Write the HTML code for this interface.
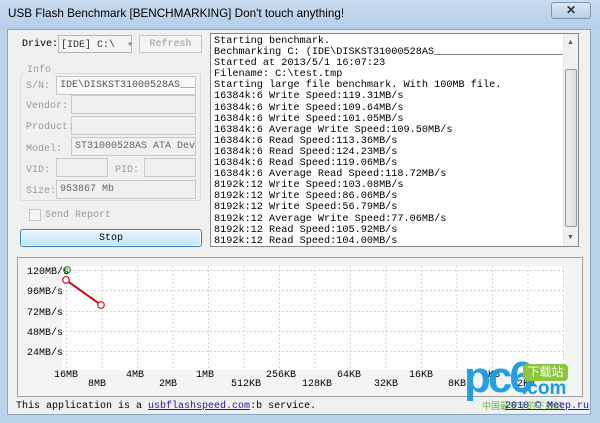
<!DOCTYPE html>
<html><head><meta charset="utf-8"><style>
*{margin:0;padding:0;box-sizing:border-box}
body{width:600px;height:423px;overflow:hidden;background:#bcd3ec;font-family:"Liberation Sans",sans-serif;position:relative}
.abs{position:absolute}
.mono{font-family:"Liberation Mono","Noto Sans CJK SC",monospace;font-size:10px;white-space:pre}
.grey{color:#9a9a9a}
.field{position:absolute;border:1px solid #c8c8c8;background:#f0f0f0;height:19px;font-family:"Liberation Mono",monospace;font-size:10px;color:#777;padding:3px 3px;white-space:pre;overflow:hidden}
.xl span{position:absolute;top:0}
.xl span.b{top:9px}
</style></head><body>
<div class="abs" style="left:0;top:0;width:600px;height:30px;background:linear-gradient(#c9dcf0,#b4cde9)"></div>
<div class="abs" style="left:8px;top:7px;font-size:11.7px;color:#000">USB Flash Benchmark [BENCHMARKING] Don't touch anything!</div>
<div class="abs" style="left:551px;top:2px;width:40px;height:17px;border:1px solid #7d95b2;border-radius:3px;background:linear-gradient(#dbe7f4,#b9cde4);font-size:12px;text-align:center;line-height:15px;color:#333;font-weight:bold">✕</div>
<div class="abs" style="left:7px;top:29px;width:584px;height:386px;background:#f0f0f0;border:1px solid #8ba4c2"></div>

<div class="abs mono" style="left:22px;top:39px;color:#000">Drive:</div>
<div class="abs mono" style="left:58px;top:35px;width:74px;height:18px;border:1px solid #b5b5b5;background:#f4f4f4;padding:3px 2px;color:#333">[IDE] C:\  <span style="color:#888">▾</span></div>
<div class="abs mono" style="left:139px;top:35px;width:63px;height:18px;border:1px solid #c4c4c4;background:#f4f4f4;text-align:center;padding-top:3px;color:#999">Refresh</div>

<div class="abs" style="left:20px;top:73px;width:181px;height:128px;border:1px solid #dcdcdc;border-radius:2px"></div>
<div class="abs mono grey" style="left:26px;top:65px;background:#f0f0f0;padding:0 1px">Info</div>
<div class="abs mono grey" style="left:26px;top:81px">S/N:</div>
<div class="field" style="left:56px;top:76px;width:140px;background:#f8f8f8;color:#555">IDE\DISKST31000528AS_____</div>
<div class="abs mono grey" style="left:26px;top:101px">Vendor:</div>
<div class="field" style="left:71px;top:95px;width:125px"></div>
<div class="abs mono grey" style="left:26px;top:122px">Product:</div>
<div class="field" style="left:71px;top:116px;width:125px"></div>
<div class="abs mono grey" style="left:26px;top:144px">Model:</div>
<div class="field" style="left:71px;top:137px;width:125px;color:#666">ST31000528AS ATA Devic</div>
<div class="abs mono grey" style="left:26px;top:165px">VID:</div>
<div class="field" style="left:56px;top:158px;width:52px"></div>
<div class="abs mono grey" style="left:115px;top:165px">PID:</div>
<div class="field" style="left:144px;top:158px;width:52px"></div>
<div class="abs mono grey" style="left:26px;top:186px">Size:</div>
<div class="field" style="left:56px;top:180px;width:140px;color:#666">953867 Mb</div>

<div class="abs" style="left:29px;top:209px;width:12px;height:12px;border:1px solid #c6c6c6;background:#f4f4f4"></div>
<div class="abs mono grey" style="left:45px;top:210px">Send Report</div>
<div class="abs mono" style="left:20px;top:229px;width:182px;height:18px;border:1px solid #3c7fb1;border-radius:3px;background:linear-gradient(#eaf6fd,#bee6fd);text-align:center;padding-top:3px;color:#000;box-shadow:inset 0 0 0 1px #fff">Stop</div>

<div class="abs" style="left:210px;top:33px;width:369px;height:214px;border:1px solid #828790;background:#fff;overflow:hidden">
<div class="abs mono" style="left:3px;top:2px;line-height:11.1px;color:#000;font-size:10.2px">Starting benchmark.
Bechmarking C: (IDE\DISKST31000528AS________________________
Started at 2013/5/1 16:07:23
Filename: C:\test.tmp
Starting large file benchmark. With 100MB file.
16384k:6 Write Speed:119.31MB/s
16384k:6 Write Speed:109.64MB/s
16384k:6 Write Speed:101.05MB/s
16384k:6 Average Write Speed:109.50MB/s
16384k:6 Read Speed:113.36MB/s
16384k:6 Read Speed:124.23MB/s
16384k:6 Read Speed:119.06MB/s
16384k:6 Average Read Speed:118.72MB/s
8192k:12 Write Speed:103.08MB/s
8192k:12 Write Speed:86.06MB/s
8192k:12 Write Speed:56.79MB/s
8192k:12 Average Write Speed:77.06MB/s
8192k:12 Read Speed:105.92MB/s
8192k:12 Read Speed:104.00MB/s</div>
<div class="abs" style="left:352px;top:0;width:16px;height:212px;background:#f0f0f0;border-left:1px solid #e8e8e8"></div>
<div class="abs" style="left:356px;top:5px;font-size:7px;color:#555">▲</div>
<div class="abs" style="left:356px;top:200px;font-size:7px;color:#555">▼</div>
<div class="abs" style="left:354px;top:35px;width:12px;height:158px;border:1px solid #9a9a9a;border-radius:2px;background:linear-gradient(90deg,#eee,#dcdcdc)"></div>
</div>

<div class="abs" style="left:17px;top:257px;width:566px;height:140px;border:1px solid #a0a0a0;background:#f4f4f4"></div>
<svg class="abs" style="left:0;top:0" width="600" height="423">
<rect x="62" y="266" width="503" height="104" fill="#fff"/>
<g stroke="#d4d4d4" stroke-dasharray="2,2" stroke-width="1">
<line x1="62" y1="270.5" x2="565" y2="270.5"/><line x1="62" y1="290.5" x2="565" y2="290.5"/><line x1="62" y1="311.5" x2="565" y2="311.5"/><line x1="62" y1="331.5" x2="565" y2="331.5"/><line x1="62" y1="351.5" x2="565" y2="351.5"/>
<line x1="66.5" y1="266" x2="66.5" y2="370"/><line x1="102" y1="266" x2="102" y2="370"/><line x1="137.5" y1="266" x2="137.5" y2="370"/><line x1="173" y1="266" x2="173" y2="370"/><line x1="208.5" y1="266" x2="208.5" y2="370"/><line x1="244" y1="266" x2="244" y2="370"/><line x1="279.5" y1="266" x2="279.5" y2="370"/><line x1="315" y1="266" x2="315" y2="370"/><line x1="350.5" y1="266" x2="350.5" y2="370"/><line x1="386" y1="266" x2="386" y2="370"/><line x1="421.5" y1="266" x2="421.5" y2="370"/><line x1="457" y1="266" x2="457" y2="370"/><line x1="492.5" y1="266" x2="492.5" y2="370"/><line x1="528" y1="266" x2="528" y2="370"/><line x1="563.5" y1="266" x2="563.5" y2="370"/>
</g>
<line x1="66" y1="280" x2="101" y2="305" stroke="#c8141e" stroke-width="2"/>
<circle cx="67" cy="270" r="3.3" fill="#fff" stroke="#2a8a2a" stroke-width="1.2"/>
<circle cx="66" cy="280" r="3.3" fill="#fff" stroke="#c8141e" stroke-width="1.2"/>
<circle cx="101" cy="305" r="3.3" fill="#fff" stroke="#c8141e" stroke-width="1.2"/>
</svg>
<div class="abs mono" style="left:27px;top:263px;line-height:20.3px">120MB/s
96MB/s
72MB/s
48MB/s
24MB/s</div>
<div class="abs mono xl" style="left:0;top:370px;width:600px;height:30px">
<span style="left:54px">16MB</span><span class="b" style="left:88px">8MB</span><span style="left:126px">4MB</span><span class="b" style="left:159px">2MB</span><span style="left:196px">1MB</span><span class="b" style="left:231px">512KB</span><span style="left:266px">256KB</span><span class="b" style="left:302px">128KB</span><span style="left:337px">64KB</span><span class="b" style="left:374px">32KB</span><span style="left:409px">16KB</span><span class="b" style="left:448px">8KB</span><span style="left:482px">4KB</span><span class="b" style="left:517px">2KB</span><span style="left:550px">1KB</span></div>
<div class="abs" style="left:464px;top:356px;font-size:44px;font-weight:bold;color:#1a9be0;letter-spacing:-3px;line-height:44px;opacity:.95">pc6</div>
<div class="abs" style="left:523px;top:364px;width:45px;height:17px;background:#8cc63f;border-radius:4px;color:#fff;font-size:12px;line-height:17px;text-align:center;font-family:'Liberation Sans','Noto Sans CJK SC',sans-serif">下载站</div>
<div class="abs" style="left:522px;top:379px;font-size:19px;font-weight:bold;color:#1a9be0;line-height:20px">.com</div>
<div class="abs" style="left:482px;top:399px;font-size:9px;color:#6ab42e;font-family:'Liberation Sans','Noto Sans CJK SC',sans-serif">中国最安全的下载站</div>
<div class="abs mono" style="left:16px;top:401px">This application is a <span style="color:#1a1aa6;text-decoration:underline">usbflashspeed.com</span>:b service.</div>
<div class="abs mono" style="left:505px;top:401px;color:#1a1aa6;text-decoration:underline">2010 © Meep.ru</div>
</body></html>
